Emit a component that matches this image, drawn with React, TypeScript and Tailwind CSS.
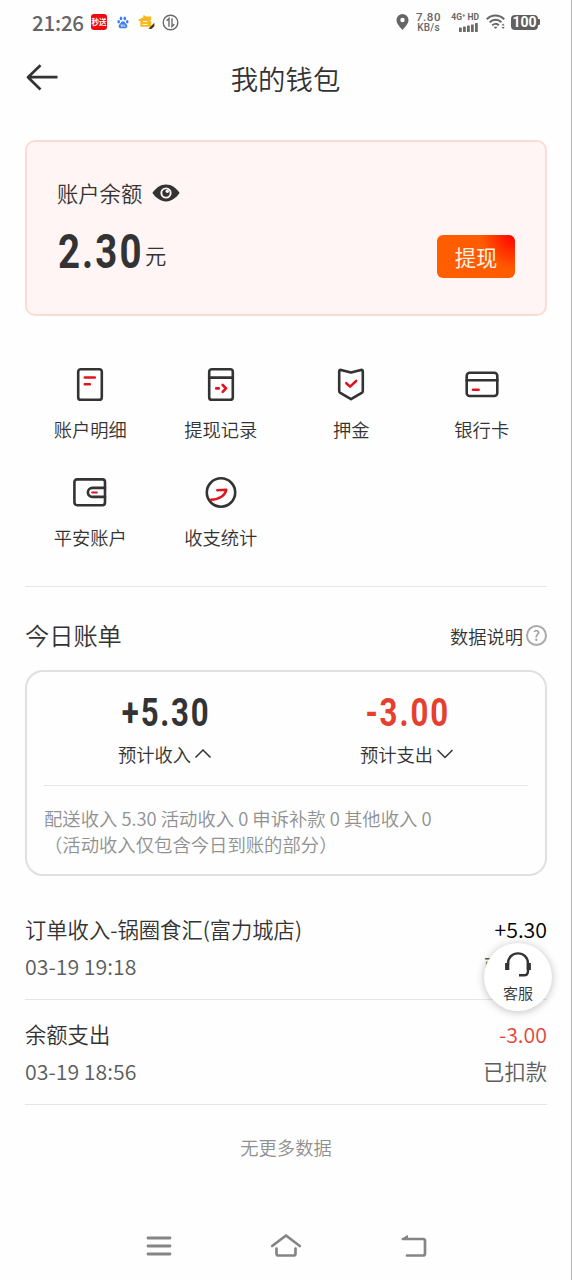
import React from "react";

interface MenuItem {
  label: string;
  icon: React.ReactNode;
}

interface Bill {
  title: string;
  time: string;
  amount: string;
  status: string;
  color: string;
}

const dark = "#333333";
const red = "#e0141e";

const menuItems: MenuItem[] = [
  {
    label: "账户明细",
    icon: (
      <>
        <rect x="6.2" y="2.2" width="23.6" height="30.6" rx="2.6" />
        <path d="M12.8 10.5h10M12.8 17.2h5" stroke={red} />
      </>
    ),
  },
  {
    label: "提现记录",
    icon: (
      <>
        <rect x="6.2" y="2.2" width="23.6" height="30.6" rx="2.6" />
        <path d="M6.2 10.6h23.6" />
        <path d="M13.2 21.4h2.6M19.7 18l3.3 3.4-3.3 3.4" stroke={red} />
      </>
    ),
  },
  {
    label: "押金",
    icon: (
      <>
        <path d="M8 2.9L18 5.6 28 2.9Q29.8 2.9 29.8 4.7V24Q29.8 25.2 28.7 25.9L18 32.2 7.3 25.9Q6.2 25.2 6.2 24V4.7Q6.2 2.9 8 2.9z" />
        <path d="M13.3 16.2l3.8 3.4 6-5.6" stroke={red} />
      </>
    ),
  },
  {
    label: "银行卡",
    icon: (
      <>
        <rect x="2.7" y="5.8" width="30.6" height="23.2" rx="3" />
        <path d="M2.7 13.3h30.6" />
        <path d="M9 22.8h5.6" stroke={red} />
      </>
    ),
  },
  {
    label: "平安账户",
    icon: (
      <>
        <rect x="2.4" y="4.4" width="30.6" height="25.8" rx="2.6" />
        <path d="M33 12.9H20.4a4.5 4.5 0 0 0 0 9H33" />
        <path d="M20.2 17.5h4.6" stroke={red} strokeWidth="2.2" />
      </>
    ),
  },
  {
    label: "收支统计",
    icon: (
      <>
        <circle cx="18" cy="17.5" r="14.2" />
        <path d="M14.3 15.2l8.9-.5c-.6 5.6-7 9.8-15.2 10" stroke={red} />
      </>
    ),
  },
];

const bills: Bill[] = [
  {
    title: "订单收入-锅圈食汇(富力城店)",
    time: "03-19 19:18",
    amount: "+5.30",
    status: "已到账",
    color: "text-black",
  },
  {
    title: "余额支出",
    time: "03-19 18:56",
    amount: "-3.00",
    status: "已扣款",
    color: "text-[#e5463c]",
  },
];

const StatusBar: React.FC = () => (
  <div className="flex h-11 items-center justify-between pl-[32px] pr-[31px] text-[#666]">
    <div className="flex items-center">
      <span className="w-[52px] whitespace-nowrap font-['Noto_Sans_CJK_SC',sans-serif] text-[20.5px] font-medium leading-[22px] tracking-[-0.2px]">
        21:26
      </span>
      <span className="ml-[7px] flex h-4 w-4 items-center justify-center overflow-hidden rounded-[3px] bg-[#ee0a0e] text-[7.5px] font-bold text-white">
        <span className="whitespace-nowrap">秒送</span>
      </span>
      {/* paw */}
      <svg className="ml-[10px]" width="12" height="13" viewBox="0 0 12 13" fill="#3f7ff0">
        <ellipse cx="1.7" cy="5.8" rx="1.3" ry="1.7" />
        <ellipse cx="4" cy="2.4" rx="1.3" ry="1.9" />
        <ellipse cx="7.8" cy="2.4" rx="1.3" ry="1.9" />
        <ellipse cx="10.2" cy="5.8" rx="1.3" ry="1.7" />
        <path d="M6 5.2c1.6 0 2.2 1.8 3.5 3 1.6 1.6.8 4-1.1 4H3.6c-1.9 0-2.7-2.4-1.1-4C3.8 7 4.4 5.2 6 5.2z" />
        <path d="M4.2 8.4v2h1.2v-2M7 8.4v2h1.4" stroke="#fff" strokeWidth=".7" fill="none" />
      </svg>
      {/* roof */}
      <svg className="ml-[9px]" width="17" height="16" viewBox="0 0 17 16">
        <path d="M0 6L5.2 3.2 5.6.9l2.6 1.6h5V6h-1.8l1.8 1.6v5.2H2.4V7.6z" fill="#f6b81c" />
        <path d="M5 7.5h4.5M4.4 10.4h5.2" stroke="#fff" strokeWidth=".9" />
        <path d="M10.4 14.8l6-6v3.5l-3 2.7z" fill="#4d3415" />
      </svg>
      <svg className="ml-[7px]" width="17" height="17" viewBox="0 0 17 17" fill="none" stroke="#6a6a6a" strokeWidth="1.4">
        <circle cx="8.5" cy="8.5" r="7.3" />
        <path d="M7 12.7V4.4L4.7 6.8M10 4.3v8.3l2.3-2.4" />
      </svg>
    </div>
    <div className="flex items-center">
      <svg width="13" height="16" viewBox="0 0 13 16">
        <path
          fillRule="evenodd"
          d="M6.5 0a6 6 0 0 1 6 6c0 3.8-3.4 7-6 10-2.6-3-6-6.2-6-10a6 6 0 0 1 6-6zm0 3.8a2.2 2.2 0 1 0 0 4.4 2.2 2.2 0 0 0 0-4.4z"
          fill="#666"
        />
      </svg>
      <div className="ml-[6px] flex w-[27px] flex-col items-center font-['Roboto'] font-medium">
        <span className="h-[10px] whitespace-nowrap text-[11.5px] leading-[10px] tracking-[0.6px]">7.80</span>
        <span className="h-[10px] whitespace-nowrap text-[10px] leading-[11px] tracking-[0.2px]">KB/s</span>
      </div>
      <div className="ml-[6px] flex w-[31px] flex-col items-end">
        <span className="whitespace-nowrap font-['Roboto'] text-[8.5px] font-bold leading-[9px]">
          4G⁺ HD
        </span>
        <svg className="mr-px mt-px" width="19" height="9" viewBox="0 0 19 9" fill="#6a6a6a">
          <rect x="0" y="4.5" width="2.8" height="4.5" rx=".6" />
          <rect x="4" y="3.6" width="2.8" height="5.4" rx=".6" />
          <rect x="8" y="2.6" width="2.8" height="6.4" rx=".6" />
          <rect x="12" y="1.4" width="2.8" height="7.6" rx=".6" />
          <rect x="16" y="0" width="2.8" height="9" rx=".6" />
        </svg>
      </div>
      <svg className="ml-[7px]" width="20" height="16" viewBox="0 0 20 16" fill="none" stroke="#666" strokeWidth="2">
        <path d="M.8 5.2C5.6.2 13.2.2 18.2 5.2" />
        <path d="M3.6 8.4C7 4.9 12.2 4.9 15.4 8.2" />
        <path d="M6.2 11.4c2-2 4.8-2 6.6-.2" />
        <path d="M7.6 12.8L9.6 15l2-2.2z" fill="#666" stroke="none" />
        <path d="M15.5 11.5l1.6-2 1.6 2zM15.5 13l1.6 2 1.6-2z" fill="#666" stroke="none" />
      </svg>
      <div className="ml-[5px] flex items-center">
        <span className="flex h-[15px] w-[27px] items-center justify-center rounded-[4px] bg-[#606060] font-['Roboto'] text-[14px] font-bold leading-none text-white">
          100
        </span>
        <span className="h-[6px] w-[2px] rounded-r-[1px] bg-[#606060]" />
      </div>
    </div>
  </div>
);

const App: React.FC = () => {
  return (
    <div className="relative flex h-[1280px] w-[572px] flex-col overflow-hidden border-r border-[#b5b5b5] bg-[#fefefe] font-['Noto_Sans_CJK_SC',sans-serif] font-[350] text-[#333]">
      <StatusBar />

      {/* Title bar */}
      <header className="flex h-[68px] items-center px-6">
        <svg width="36" height="30" viewBox="0 0 36 30" fill="none" stroke="#333" strokeWidth="2.7">
          <path d="M16.5 2.3L4 14.2l12.5 12.3M4 14.2h29.5" strokeLinejoin="round" />
        </svg>
        <h1 className="flex-1 pr-9 text-center text-[27.4px] leading-8">我的钱包</h1>
      </header>

      <main className="mt-[28px] px-[25px]">
        {/* Balance card */}
        <section className="flex h-44 w-[522px] justify-between rounded-[10px] border-2 border-[#fadcd7] bg-[#fff5f4] pl-[30px] pr-[30px]">
          <div className="pt-[37px]">
            <div className="flex items-center">
              <span className="text-[21.3px] leading-7">账户余额</span>
              <svg className="ml-[10px]" width="28" height="18" viewBox="0 0 28 18">
                <path d="M.4 9C4 4 8.5.6 14 .6S24 4 27.6 9C24 14 19.5 17.4 14 17.4S4 14 .4 9z" fill="#333" />
                <circle cx="14" cy="9" r="5.6" fill="#fff5f4" />
                <circle cx="14" cy="9" r="3.7" fill="#333" />
                <circle cx="15.3" cy="7.2" r="1.7" fill="#fff5f4" />
              </svg>
            </div>
            <div className="mt-[17px] flex items-end">
              <span className="w-[88px] whitespace-nowrap pl-[1px]">
                <span className="inline-block origin-left scale-x-[0.8] font-['Roboto'] text-[48px] font-bold leading-[56px] tracking-[2.6px]">
                  2.30
                </span>
              </span>
              <span className="pb-[11px] text-[21.3px] leading-7">元</span>
            </div>
          </div>
          <button className="mt-[93px] flex h-[43px] w-[78px] items-center justify-center rounded-[6px] bg-[radial-gradient(circle_at_100%_0%,#ff0000_0px,#ff1500_8px,#ff5a00_34px,#ff5f00_100%)] text-[21.3px] font-normal text-[#fff3e6]">
            提现
          </button>
        </section>

        <section className="mt-[51px] grid w-[522px] grid-cols-4">
          {menuItems.map((item) => (
            <div key={item.label} className="flex h-[108px] flex-col items-center">
              <svg
                width="36"
                height="36"
                viewBox="0 0 36 36"
                fill="none"
                stroke={dark}
                strokeWidth="2.6"
                strokeLinecap="round"
                strokeLinejoin="round"
              >
                {item.icon}
              </svg>
              <span className="mt-[14px] text-[18.3px] leading-6">{item.label}</span>
            </div>
          ))}
        </section>

        <div className="mt-[3px] h-px w-[522px] bg-[#e6e6e6]" />

        {/* Today's bill */}
        <section className="w-[522px]">
          <div className="mt-[32px] flex h-8 items-center justify-between">
            <h2 className="text-[24.2px] leading-8">今日账单</h2>
            <div className="flex items-center">
              <span className="pt-px text-[18.3px] leading-6">数据说明</span>
              <span className="ml-[3px] flex h-[21px] w-[21px] items-center justify-center rounded-full border-2 border-[#aaa] text-[14px] font-medium leading-none text-[#999]">
                ?
              </span>
            </div>
          </div>

          <div className="mt-[19px] h-[206px] rounded-[18px] border-2 border-[#e0e0e0] px-[17px]">
            <div className="flex h-[114px] border-b border-[#e6e6e6]">
              <div className="flex flex-1 flex-col items-center pt-[20px]">
                <span className="inline-block scale-x-[0.8] whitespace-nowrap pl-[2px] font-['Roboto'] text-[39px] font-bold leading-[42px] tracking-[2.2px]">
                  +5.30
                </span>
                <div className="mt-[8px] flex items-center">
                  <span className="text-[18.3px] leading-6">预计收入</span>
                  <svg className="ml-[3px]" width="18" height="12" viewBox="0 0 18 12" fill="none" stroke="#333" strokeWidth="1.5">
                    <path d="M1.5 9.5L9 2l7.5 7.5" />
                  </svg>
                </div>
              </div>
              <div className="flex flex-1 flex-col items-center pt-[20px]">
                <span className="inline-block scale-x-[0.8] whitespace-nowrap pl-[2px] font-['Roboto'] text-[39px] font-bold leading-[42px] tracking-[2.4px] text-[#e5402f]">
                  -3.00
                </span>
                <div className="mt-[8px] flex items-center">
                  <span className="text-[18.3px] leading-6">预计支出</span>
                  <svg className="ml-[3px]" width="18" height="12" viewBox="0 0 18 12" fill="none" stroke="#333" strokeWidth="1.5">
                    <path d="M1.5 2L9 9.5 16.5 2" />
                  </svg>
                </div>
              </div>
            </div>
            <div className="pt-[20px] text-[18.35px] leading-[25.5px] text-[#909090]">
              <p>配送收入 5.30 活动收入 0 申诉补款 0 其他收入 0</p>
              <p>（活动收入仅包含今日到账的部分）</p>
            </div>
          </div>
        </section>

        <section className="mt-[19px] w-[522px]">
          {bills.map((bill) => (
            <div key={bill.time} className="h-[105px] border-b border-[#e6e6e6] pt-[18px] text-[21.3px]">
              <div className="flex justify-between leading-[32px]">
                <span>{bill.title}</span>
                <span className={bill.color}>{bill.amount}</span>
              </div>
              <div className="mt-[5px] flex justify-between leading-[32px] text-[#5c5c5c]">
                <span>{bill.time}</span>
                <span>{bill.status}</span>
              </div>
            </div>
          ))}
          <p className="mt-[30px] text-center text-[18.3px] leading-6 text-[#909090]">无更多数据</p>
        </section>
      </main>

      {/* Floating customer service button */}
      <button className="absolute right-[19px] top-[943px] flex h-[68px] w-[68px] flex-col items-center rounded-full bg-white pt-[9px] shadow-[0_1px_8px_rgba(0,0,0,0.25)]">
        <svg width="28" height="26" viewBox="0 0 28 26" fill="none" stroke="#333">
          <path d="M4 13v-1.5C4 5.500 8.500 1.400 14 1.400s10 4.100 10 10.100V19c0 2.800-1.500 4.300-4 4.300h-5" strokeWidth="2.4" />
          <path d="M3.200 11v7M24.800 11v7" strokeWidth="4.2" />
        </svg>
        <span className="mt-[5px] text-[15px] leading-5">客服</span>
      </button>

      {/* System navigation */}
      <nav className="mt-auto flex h-[68px] items-center justify-center gap-[98px] pl-[2px] text-[#858585]">
        <svg width="26" height="24" viewBox="0 0 26 24" stroke="currentColor" strokeWidth="2.8" strokeLinecap="round">
          <path d="M2 4h22M2 12h22M2 20h22" />
        </svg>
        <svg width="32" height="26" viewBox="0 0 32 26" fill="none" stroke="currentColor" strokeWidth="2.7" strokeLinecap="round" strokeLinejoin="round">
          <path d="M2.2 13L16 2.5 29.8 13" />
          <path d="M6.5 15.5v5a2 2 0 0 0 2 2h15a2 2 0 0 0 2-2v-5" />
        </svg>
        <svg width="28" height="26" viewBox="0 0 28 26" fill="none" stroke="currentColor" strokeWidth="2.7" strokeLinecap="round" strokeLinejoin="round">
          <path d="M3 6h20a2 2 0 0 1 2 2v12.500a2 2 0 0 1-2 2H7" />
          <path d="M2.2 6l5.300-3.500V6z" fill="currentColor" strokeWidth="1" />
        </svg>
      </nav>
    </div>
  );
};

export default App;
